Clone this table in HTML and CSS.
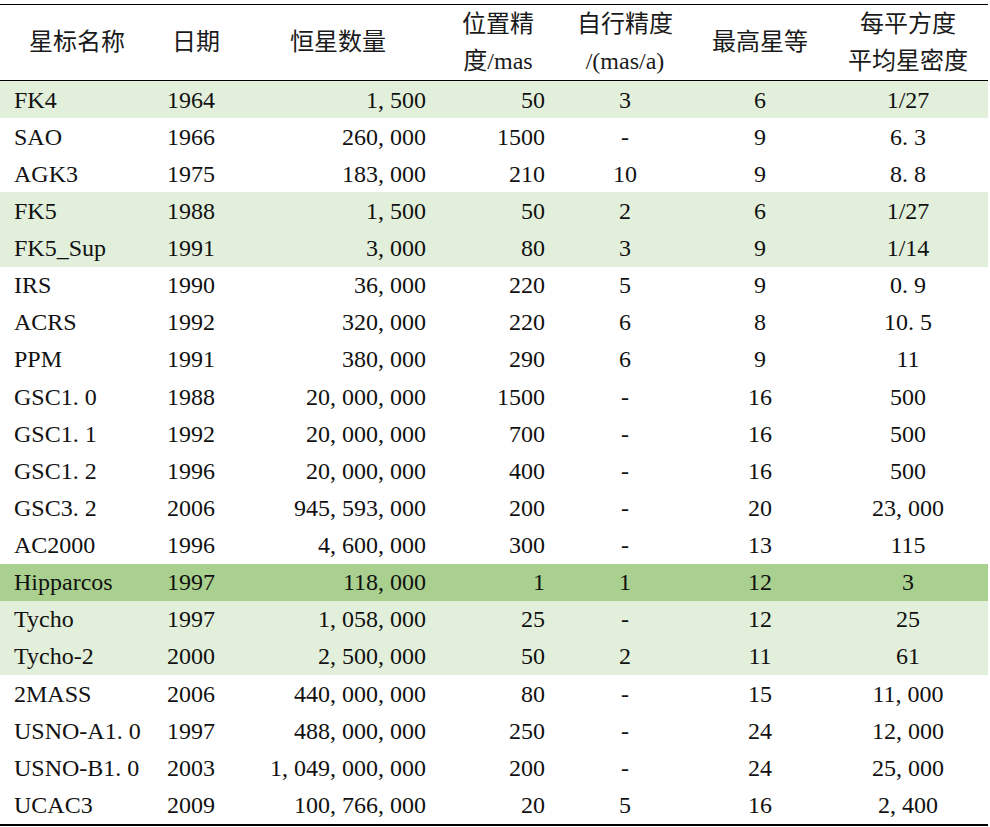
FILE: index.html
```html
<!DOCTYPE html>
<html lang="zh-CN">
<head>
<meta charset="utf-8">
<title>星表</title>
<link rel="stylesheet" href="styles.css">
</head>
<body>
<div class="page">
<table class="cat">
  <colgroup>
    <col class="w1"><col class="w2"><col class="w3"><col class="w4"><col class="w5"><col class="w6"><col class="w7">
  </colgroup>
  <thead>
    <tr>
      <th>星标名称</th>
      <th>日期</th>
      <th>恒星数量</th>
      <th>位置精<br>度/mas</th>
      <th>自行精度<br>/(mas/a)</th>
      <th>最高星等</th>
      <th>每平方度<br>平均星密度</th>
    </tr>
  </thead>
  <tbody>
    <tr class="lt"><td>FK4</td><td>1964</td><td>1<span class="s">,</span>500</td><td>50</td><td>3</td><td>6</td><td>1/27</td></tr>
    <tr><td>SAO</td><td>1966</td><td>260<span class="s">,</span>000</td><td>1500</td><td>-</td><td>9</td><td>6<span class="s">.</span>3</td></tr>
    <tr><td>AGK3</td><td>1975</td><td>183<span class="s">,</span>000</td><td>210</td><td>10</td><td>9</td><td>8<span class="s">.</span>8</td></tr>
    <tr class="lt"><td>FK5</td><td>1988</td><td>1<span class="s">,</span>500</td><td>50</td><td>2</td><td>6</td><td>1/27</td></tr>
    <tr class="lt"><td>FK5_Sup</td><td>1991</td><td>3<span class="s">,</span>000</td><td>80</td><td>3</td><td>9</td><td>1/14</td></tr>
    <tr><td>IRS</td><td>1990</td><td>36<span class="s">,</span>000</td><td>220</td><td>5</td><td>9</td><td>0<span class="s">.</span>9</td></tr>
    <tr><td>ACRS</td><td>1992</td><td>320<span class="s">,</span>000</td><td>220</td><td>6</td><td>8</td><td>10<span class="s">.</span>5</td></tr>
    <tr><td>PPM</td><td>1991</td><td>380<span class="s">,</span>000</td><td>290</td><td>6</td><td>9</td><td>11</td></tr>
    <tr><td>GSC1<span class="s">.</span>0</td><td>1988</td><td>20<span class="s">,</span>000<span class="s">,</span>000</td><td>1500</td><td>-</td><td>16</td><td>500</td></tr>
    <tr><td>GSC1<span class="s">.</span>1</td><td>1992</td><td>20<span class="s">,</span>000<span class="s">,</span>000</td><td>700</td><td>-</td><td>16</td><td>500</td></tr>
    <tr><td>GSC1<span class="s">.</span>2</td><td>1996</td><td>20<span class="s">,</span>000<span class="s">,</span>000</td><td>400</td><td>-</td><td>16</td><td>500</td></tr>
    <tr><td>GSC3<span class="s">.</span>2</td><td>2006</td><td>945<span class="s">,</span>593<span class="s">,</span>000</td><td>200</td><td>-</td><td>20</td><td>23<span class="s">,</span>000</td></tr>
    <tr><td>AC2000</td><td>1996</td><td>4<span class="s">,</span>600<span class="s">,</span>000</td><td>300</td><td>-</td><td>13</td><td>115</td></tr>
    <tr class="dk"><td>Hipparcos</td><td>1997</td><td>118<span class="s">,</span>000</td><td>1</td><td>1</td><td>12</td><td>3</td></tr>
    <tr class="lt"><td>Tycho</td><td>1997</td><td>1<span class="s">,</span>058<span class="s">,</span>000</td><td>25</td><td>-</td><td>12</td><td>25</td></tr>
    <tr class="lt"><td>Tycho-2</td><td>2000</td><td>2<span class="s">,</span>500<span class="s">,</span>000</td><td>50</td><td>2</td><td>11</td><td>61</td></tr>
    <tr><td>2MASS</td><td>2006</td><td>440<span class="s">,</span>000<span class="s">,</span>000</td><td>80</td><td>-</td><td>15</td><td>11<span class="s">,</span>000</td></tr>
    <tr><td>USNO-A1<span class="s">.</span>0</td><td>1997</td><td>488<span class="s">,</span>000<span class="s">,</span>000</td><td>250</td><td>-</td><td>24</td><td>12<span class="s">,</span>000</td></tr>
    <tr><td>USNO-B1<span class="s">.</span>0</td><td>2003</td><td>1<span class="s">,</span>049<span class="s">,</span>000<span class="s">,</span>000</td><td>200</td><td>-</td><td>24</td><td>25<span class="s">,</span>000</td></tr>
    <tr><td>UCAC3</td><td>2009</td><td>100<span class="s">,</span>766<span class="s">,</span>000</td><td>20</td><td>5</td><td>16</td><td>2<span class="s">,</span>400</td></tr>
  </tbody>
</table>
</div>
</body>
</html>
```
FILE: styles.css
```css
html, body {
  margin: 0;
  padding: 0;
  background: #ffffff;
}

.page {
  padding-top: 4px;
}

.cat {
  width: 988px;
  table-layout: fixed;
  border-collapse: collapse;
  font-family: "Liberation Serif", "Noto Sans CJK SC", serif;
  font-size: 24px;
  color: #111111;
  border-top: 1px solid #000000;
  border-bottom: 2px solid #000000;
}

.w1 { width: 154px; }
.w2 { width: 84px; }
.w3 { width: 200px; }
.w4 { width: 120px; }
.w5 { width: 134px; }
.w6 { width: 136px; }
.w7 { width: 160px; }

.cat thead th {
  font-weight: normal;
  font-size: 24px;
  line-height: 37px;
  height: 75px;
  padding: 0;
  text-align: center;
  vertical-align: middle;
  border-bottom: 1px solid #000000;
  white-space: nowrap;
  color: #1a1a1a;
}

.cat tbody td {
  height: 37.125px;
  padding: 0;
  line-height: 28px;
  vertical-align: middle;
  white-space: nowrap;
}

.s {
  margin-right: 6px;
}

.cat tbody td:nth-child(1) { text-align: left; padding-left: 14px; }
.cat tbody td:nth-child(2) { text-align: left; padding-left: 13px; }
.cat tbody td:nth-child(3) { text-align: right; padding-right: 12px; }
.cat tbody td:nth-child(4) { text-align: right; padding-right: 13px; }
.cat tbody td:nth-child(5) { text-align: center; }
.cat tbody td:nth-child(6) { text-align: center; }
.cat tbody td:nth-child(7) { text-align: center; }

.cat tbody tr.lt { background: #e2efda; }
.cat tbody tr.dk { background: #a9d08e; }
```
